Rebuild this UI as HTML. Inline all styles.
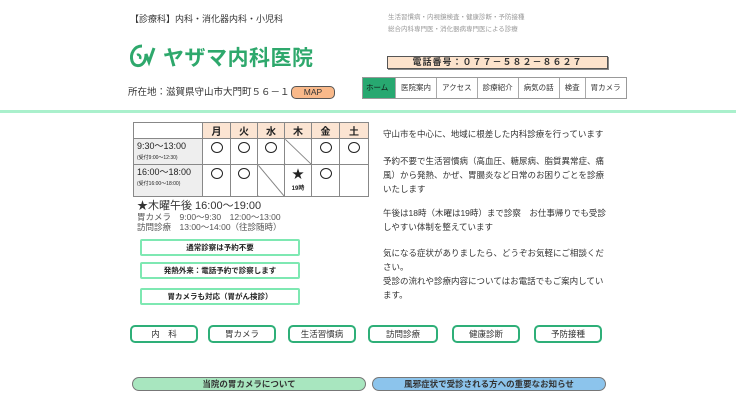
<!DOCTYPE html>
<html><head><meta charset="utf-8"><style>
*{margin:0;padding:0;box-sizing:border-box}
body{width:736px;height:400px;overflow:hidden;background:#fff;font-family:"Liberation Sans","Noto Sans CJK JP",sans-serif;color:#333;position:relative}
.a{position:absolute;white-space:nowrap}
.nav{position:absolute;left:362px;top:77px;height:22px;display:flex;border:1px solid #999}
.nav div{font-size:7.5px;line-height:20px;padding:0 5px;border-left:1px solid #aaa;color:#333;background:#fff;white-space:nowrap}
.nav div:first-child{border-left:none;background:#27a870;color:#111;width:32px;padding:0 3px}
table{position:absolute;left:133px;top:122px;border-collapse:collapse}
td{border:1px solid #888;text-align:center;font-size:12px;color:#222;vertical-align:top}
.h td{background:#fbe4d2;font-weight:bold;font-size:10px;height:15px;vertical-align:middle}
.t{background:#eee;text-align:left;padding-left:3px;font-size:9px;line-height:10px;padding-top:2px}
.t small{font-size:5px}
.c{display:inline-block;width:12px;height:11px;border:1.3px solid #222;border-radius:50%;margin-top:3px}
.box{position:absolute;left:140px;width:160px;height:17px;border:2px solid #7ee8b2;border-radius:2px;font-size:7.5px;font-weight:bold;text-align:center;line-height:13px;color:#222}
.btn{position:absolute;top:325px;width:68px;height:18px;border:2px solid #2eaf78;border-radius:5px;font-size:8.5px;text-align:center;line-height:14px;color:#333}
.rt{position:absolute;left:383px;font-size:8.5px;line-height:14px;color:#333}
.sl{background:linear-gradient(to top right,transparent 48%,#666 50%,transparent 52%)}
</style></head><body>
<div class="a" style="left:130px;top:12px;font-size:9px">【診療科】内科・消化器内科・小児科</div>
<div class="a" style="left:388px;top:11px;font-size:6.5px;color:#999">生活習慣病・内視鏡検査・健康診断・予防接種</div>
<div class="a" style="left:388px;top:23px;font-size:6.5px;color:#999">総合内科専門医・消化器病専門医による診療</div>
<svg class="a" style="left:128px;top:42px" width="32" height="28" viewBox="0 0 32 28"><path d="M14 4C6 4 2 12 4 19c2 6 9 6 12 1 2-3 2-8 2-8l3 8 5-14" fill="none" stroke="#2ea86c" stroke-width="3"/><path d="M9 13c2-1 4 1 3 4" fill="none" stroke="#2ea86c" stroke-width="2.5"/></svg>
<div class="a" style="left:163px;top:42px;font-size:21px;color:#2ea86c;font-weight:bold;letter-spacing:0.5px">ヤザマ内科医院</div>
<div class="a" style="left:128px;top:84px;font-size:9.5px">所在地：滋賀県守山市大門町５６－１</div>
<div class="a" style="left:291px;top:86px;width:44px;height:13px;background:#f9b98a;border:1px solid #555;border-radius:5px;font-size:8.5px;text-align:center;line-height:11px">MAP</div>
<div class="a" style="left:387px;top:56px;width:221px;height:13px;background:#fde3cc;border:1px solid #555;box-shadow:1px 1px 0 #888;font-size:9px;font-weight:bold;text-align:center;line-height:11px;letter-spacing:1px">電話番号：０７７－５８２－８６２７</div>
<div class="nav"><div>ホーム</div><div>医院案内</div><div>アクセス</div><div>診療紹介</div><div>病気の話</div><div>検査</div><div>胃カメラ</div></div>
<div class="a" style="left:0;top:110px;width:736px;height:3px;background:#aaf0cc"></div>
<table>
<tr class="h"><td style="width:69px;background:#fff"></td><td style="width:28px">月</td><td style="width:27px">火</td><td style="width:27px">水</td><td style="width:27px">木</td><td style="width:28px">金</td><td style="width:29px">土</td></tr>
<tr style="height:26px"><td class="t">9:30～13:00<br><small>(受付9:00～12:30)</small></td><td><span class="c"></span></td><td><span class="c"></span></td><td><span class="c"></span></td><td class="sl"></td><td><span class="c"></span></td><td><span class="c"></span></td></tr>
<tr style="height:32px"><td class="t">16:00～18:00<br><small>(受付16:00～18:00)</small></td><td><span class="c"></span></td><td><span class="c"></span></td><td class="sl"></td><td style="line-height:12px;padding-top:3px">★<br><span style="font-size:6px;font-weight:bold">19時</span></td><td><span class="c"></span></td><td></td></tr>
</table>
<div class="a" style="left:137px;top:197px;font-size:11px">★木曜午後 16:00～19:00</div>
<div class="a" style="left:137px;top:211px;font-size:8.5px;color:#555">胃カメラ　9:00～9:30　12:00～13:00</div>
<div class="a" style="left:137px;top:221px;font-size:8.5px;color:#555">訪問診療　13:00～14:00（往診随時）</div>
<div class="box" style="top:239px">通常診察は予約不要</div>
<div class="box" style="top:262px">発熱外来：電話予約で診察します</div>
<div class="box" style="top:288px">胃カメラも対応（胃がん検診）</div>
<div class="rt" style="top:127px">守山市を中心に、地域に根差した内科診療を行っています</div>
<div class="rt" style="top:154px">予約不要で生活習慣病（高血圧、糖尿病、脂質異常症、痛<br>風）から発熱、かぜ、胃腸炎など日常のお困りごとを診療<br>いたします</div>
<div class="rt" style="top:206px">午後は18時（木曜は19時）まで診察　お仕事帰りでも受診<br>しやすい体制を整えています</div>
<div class="rt" style="top:246px">気になる症状がありましたら、どうぞお気軽にご相談くだ<br>さい。<br>受診の流れや診療内容についてはお電話でもご案内してい<br>ます。</div>
<div class="btn" style="left:130px">内　科</div>
<div class="btn" style="left:208px">胃カメラ</div>
<div class="btn" style="left:288px">生活習慣病</div>
<div class="btn" style="left:368px;width:70px">訪問診療</div>
<div class="btn" style="left:452px">健康診断</div>
<div class="btn" style="left:534px">予防接種</div>
<div class="a" style="left:132px;top:377px;width:234px;height:14px;background:#a8e6bf;border:1px solid #777;border-radius:7px;font-size:8.5px;font-weight:bold;text-align:center;line-height:12px">当院の胃カメラについて</div>
<div class="a" style="left:372px;top:377px;width:234px;height:14px;background:#8cc4ec;border:1px solid #777;border-radius:7px;font-size:8.5px;font-weight:bold;text-align:center;line-height:12px">風邪症状で受診される方への重要なお知らせ</div>
</body></html>
